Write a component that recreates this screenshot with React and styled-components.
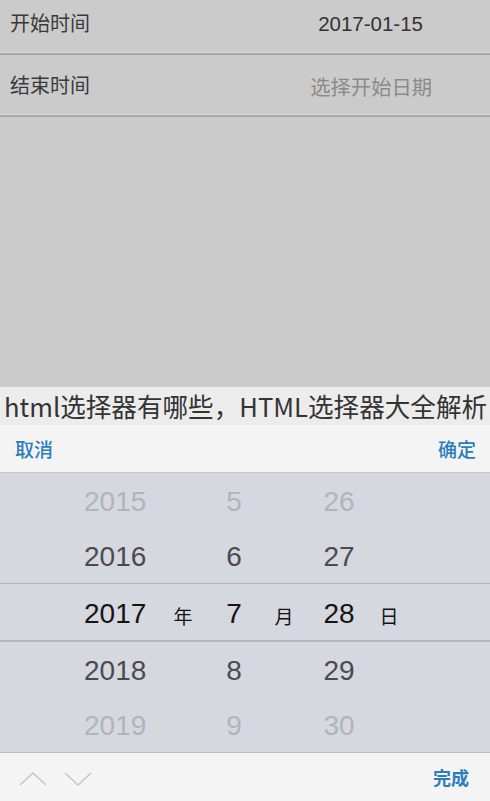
import React from 'react'
import styled, { createGlobalStyle } from 'styled-components'

const GlobalStyle = createGlobalStyle`
    html, body {
        margin: 0;
        padding: 0;
        background: #cbcbcb;
    }
    body {
        font-family: "Liberation Sans", "Noto Sans CJK SC", sans-serif;
    }
`

const Page = styled.div`
    width: 490px;
    height: 801px;
    display: flex;
    flex-direction: column;
    overflow: hidden;
`

const Form = styled.div`
    height: 387px;
    background: #cbcbcb;
`

const FormRow = styled.div`
    height: ${p => p.h}px;
    display: flex;
    align-items: center;
    justify-content: space-between;
    padding: 0 ${p => p.pr}px 0 10px;
    border-bottom: 2px solid #a8a8a8;
    box-shadow: inset 0 -1px 0 #dadada;
    box-sizing: border-box;
`

const Label = styled.span`
    color: #3a3a3a;
    font-family: "Noto Sans CJK SC", sans-serif;
    font-size: 20px;
    margin-top: ${p => p.mt || 0}px;
`

const Value = styled.span`
    color: ${p => (p.placeholder ? '#8a8a8a' : '#333')};
    font-family: "Liberation Sans", "Noto Sans CJK SC", sans-serif;
    font-size: ${p => (p.placeholder ? 20.3 : 20.5)}px;
    margin-top: ${p => p.mt || 0}px;
`

const Title = styled.div`
    height: 38px;
    background: #ececec;
    color: #333;
    font-family: "Noto Sans CJK SC", sans-serif;
    font-size: 25.6px;
    line-height: 38px;
    padding-left: 4px;
    white-space: nowrap;
    overflow: hidden;
`

const Toolbar = styled.div`
    height: 48px;
    box-sizing: border-box;
    background: #f4f4f4;
    border-bottom: 1px solid #c6c9cf;
    display: flex;
    align-items: center;
    justify-content: space-between;
    padding: 0 14px 0 15px;
`

const LinkButton = styled.button`
    border: none;
    background: none;
    padding: 0;
    color: #2b7dbf;
    font-family: "Noto Sans CJK SC", sans-serif;
    font-size: ${p => (p.bold ? 18 : 19)}px;
    font-weight: ${p => (p.bold ? 700 : 500)};
    cursor: pointer;
`

const Picker = styled.div`
    height: 279px;
    background: #d5d8df;
    display: flex;
    flex-direction: column;
`

const PickerRow = styled.div`
    flex: 1;
    display: grid;
    grid-template-columns: 84px 62px 74px 28px 72px 38px 62px;
    align-items: center;
    padding-top: 3px;
    box-sizing: border-box;
    border-top: ${p => (p.selected ? '1px solid #b2b5bb' : 'none')};
    border-bottom: ${p => (p.selected ? '2px solid #b2b5bb' : 'none')};
`

const rowColors = ['#b2b4ba', '#4a4b4e', '#141414', '#4a4b4e', '#b2b4ba']

const Num = styled.span`
    grid-column: ${p => p.col};
    text-align: center;
    font-family: "Liberation Sans", sans-serif;
    font-size: 28px;
    color: ${p => p.color};
`

const Unit = styled.span`
    grid-column: ${p => p.col};
    text-align: center;
    font-family: "Noto Sans CJK SC", sans-serif;
    font-size: 19px;
    color: #141414;
    margin-top: 4px;
`

const BottomBar = styled.div`
    flex: 1;
    background: #f4f4f4;
    border-top: 1px solid #b9bbc0;
    display: flex;
    align-items: center;
    padding: 0 21px 0 19px;
`

const Arrows = styled.div`
    display: flex;
    gap: 17px;
    margin-top: 3px;
`

const Spacer = styled.div`
    flex: 1;
`

const Chevron = ({ down }) => (
    <svg width="28" height="16" viewBox="0 0 28 16" fill="none">
        <path
            d={down ? 'M1 2 L14 14 L27 2' : 'M1 14 L14 2 L27 14'}
            stroke="#c6c6c6"
            strokeWidth="1.6"
        />
    </svg>
)

const rows = [
    ['2015', '5', '26'],
    ['2016', '6', '27'],
    ['2017', '7', '28'],
    ['2018', '8', '29'],
    ['2019', '9', '30'],
]

const App = () => {
    return (
        <Page>
            <GlobalStyle />
            <Form>
                <FormRow h={55} pr={67}>
                    <Label mt={-8}>开始时间</Label>
                    <Value mt={-6}>2017-01-15</Value>
                </FormRow>
                <FormRow h={62} pr={58}>
                    <Label mt={-2}>结束时间</Label>
                    <Value placeholder="1" mt={2}>选择开始日期</Value>
                </FormRow>
            </Form>
            <Title>html选择器有哪些，HTML选择器大全解析</Title>
            <Toolbar>
                <LinkButton>取消</LinkButton>
                <LinkButton>确定</LinkButton>
            </Toolbar>
            <Picker>
                {rows.map((r, i) => (
                    <PickerRow key={r[0]} selected={i === 2}>
                        <Num col={2} color={rowColors[i]}>{r[0]}</Num>
                        {i === 2 && <Unit col={3}>年</Unit>}
                        <Num col={4} color={rowColors[i]}>{r[1]}</Num>
                        {i === 2 && <Unit col={5}>月</Unit>}
                        <Num col={6} color={rowColors[i]}>{r[2]}</Num>
                        {i === 2 && <Unit col={7}>日</Unit>}
                    </PickerRow>
                ))}
            </Picker>
            <BottomBar>
                <Arrows>
                    <Chevron />
                    <Chevron down />
                </Arrows>
                <Spacer />
                <LinkButton bold>完成</LinkButton>
            </BottomBar>
        </Page>
    )
}

export default App
